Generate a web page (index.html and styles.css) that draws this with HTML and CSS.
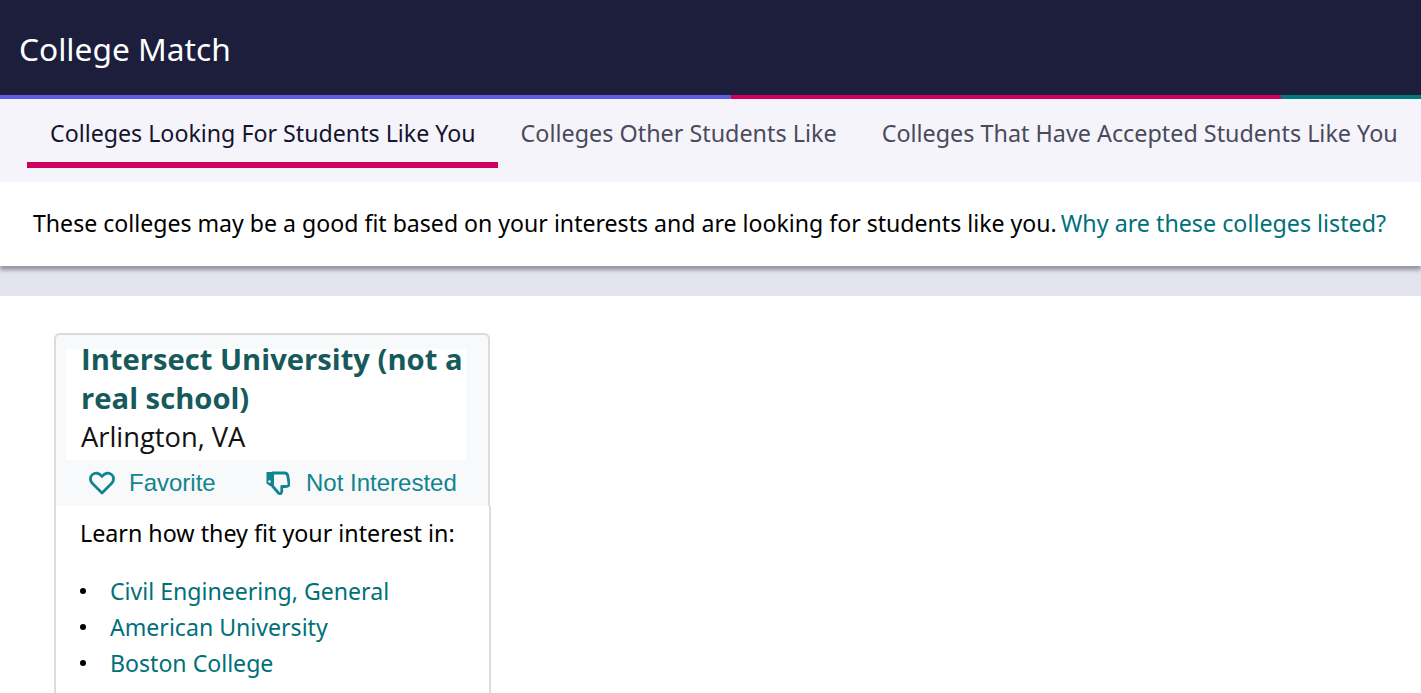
FILE: index.html
```html
<!DOCTYPE html>
<html>
  <head>
    <meta charset="UTF-8">
    <title>College Match</title>
    <link rel="stylesheet" href="styles.css">
  </head>
  <body>
    <header class="topbar">College Match</header>
    <div class="strip">
      <div class="strip-one"></div>
      <div class="strip-two"></div>
      <div class="strip-three"></div>
    </div>
    <nav class="tabs">
      <a class="tab active">Colleges Looking For Students Like You</a>
      <a class="tab">Colleges Other Students Like</a>
      <a class="tab">Colleges That Have Accepted Students Like You</a>
    </nav>
    <div class="info">
      These colleges may be a good fit based on your interests and are looking for students like you.
      <a class="link">Why are these colleges listed?</a>
    </div>
    <div class="band"></div>
    <section class="content">
      <div class="card">
        <div class="card-top">
          <div class="school">
            <h2 class="school-name">Intersect University (not a real school)</h2>
            <div class="school-place">Arlington, VA</div>
          </div>
          <div class="actions">
            <span class="action action-fav">
              <svg class="icon icon-heart" width="26" height="24" viewBox="0 0 26 24">
                <path d="M13 22 L3.500 12.500 C0.500 9.500 1 5.500 3.500 3.500 C6 1.500 10 1.500 13 5.500 C16 1.500 20 1.500 22.500 3.500 C25 5.500 25.500 9.500 22.500 12.500 Z" fill="none" stroke="#12848f" stroke-width="2.800" stroke-linejoin="round"/>
              </svg>
              Favorite
            </span>
            <span class="action">
              <svg class="icon icon-thumb" width="24" height="24" viewBox="0 0 24 24">
                <path d="M0.500 1 H8 V15 H4 L0.500 12.500 Z" fill="#12848f"/>
                <circle cx="3.500" cy="10.500" r="1.300" fill="#f7f9fb"/>
                <path d="M6 2 H18.500 C20.500 2 21.500 3 21.800 5 L23 12.500 C23.200 14.500 22 15.500 20 15.500 H15.800 V20 C15.800 22.500 14 23.500 12.500 22 L6 14.500" fill="none" stroke="#12848f" stroke-width="2.800" stroke-linejoin="round"/>
              </svg>
              Not Interested
            </span>
          </div>
        </div>
        <div class="card-body">
          <p class="fit">Learn how they fit your interest in:</p>
          <ul class="fit-list">
            <li><a class="link">Civil Engineering, General</a></li>
            <li><a class="link">American University</a></li>
            <li><a class="link">Boston College</a></li>
          </ul>
        </div>
      </div>
    </section>
  </body>
</html>
```

FILE: styles.css
```css
html, body {
    margin: 0;
    height: 693px;
    overflow: hidden;
}
body {
    font-family: "Noto Sans", "Open Sans", sans-serif;
    background: #fff;
}
.topbar {
    height: 95px;
    box-sizing: border-box;
    padding: 28px 0 0 19px;
    background: #1c1e3c;
    color: #fff;
    font-size: 31.7px;
    line-height: 42px;
}
.strip {
    display: flex;
    height: 4px;
}
.strip-one {
    width: 731px;
    background: #5c5ce8;
}
.strip-two {
    width: 550px;
    background: #d0005f;
}
.strip-three {
    flex: 1;
    background: #007a7a;
}
.tabs {
    display: flex;
    height: 83px;
    box-sizing: border-box;
    padding: 15px 0 0 27px;
    background: #f4f4fa;
}
.tab {
    height: 48px;
    padding: 0 23px;
    margin-right: -1px;
    font-size: 23.35px;
    line-height: 38px;
    color: #4a4a5c;
    white-space: nowrap;
}
.tab.active {
    padding-right: 22px;
    margin-right: 0;
    font-size: 23.2px;
    color: #14142e;
    border-bottom: 6px solid #d0005f;
}
.info {
    height: 84px;
    box-sizing: border-box;
    padding: 25px 0 0 33px;
    background: #fff;
    color: #000;
    font-size: 23.1px;
    line-height: 32px;
    white-space: nowrap;
    box-shadow: 0 4px 4px rgba(50, 50, 70, 0.45);
    position: relative;
}
.link {
    color: #00707a;
}
.info .link {
    margin-left: -2px;
    font-size: 23.25px;
}
.band {
    height: 30px;
    background: #e4e4ee;
}
.content {
    padding: 37px 0 0 54px;
}
.card {
    width: 437px;
}
.card-top {
    box-sizing: border-box;
    width: 436px;
    height: 173px;
    padding: 14px 22px 0 10px;
    background: #f7f9fb;
    border: 2px solid #dcdcdc;
    border-bottom: 0;
    border-radius: 6px 6px 0 0;
}
.school {
    display: flow-root;
    height: 111px;
    padding-left: 15px;
    background: #fff;
    font-family: "Open Sans", sans-serif;
}
.school-name {
    margin: -9px 0 0;
    color: #165a5c;
    font-size: 29.2px;
    font-weight: 700;
    line-height: 39px;
}
.school-place {
    color: #111;
    font-size: 27.3px;
    line-height: 38px;
}
.actions {
    display: flex;
    padding: 8px 0 0 23px;
    font-family: "Liberation Sans", sans-serif;
    font-size: 24px;
    line-height: 30px;
    color: #12848f;
}
.action {
    display: flex;
    align-items: center;
}
.action-fav {
    width: 177px;
}
.icon-heart {
    margin-right: 14px;
}
.icon-thumb {
    margin-right: 16px;
}
.card-body {
    height: 240px;
    box-sizing: border-box;
    padding: 11px 0 0 24px;
    border: 2px solid #dcdcdc;
    border-top: 0;
    background: #fff;
}
.fit {
    margin: 0;
    color: #000;
    font-size: 23.25px;
    line-height: 32px;
}
.fit-list {
    list-style: none;
    margin: 24px 0 0;
    padding: 0;
    font-size: 23.1px;
    line-height: 36px;
}
.fit-list li {
    display: flex;
    align-items: center;
}
.fit-list li::before {
    content: "";
    width: 6px;
    height: 6px;
    margin-right: 24px;
    border-radius: 50%;
    background: #000;
}
```
